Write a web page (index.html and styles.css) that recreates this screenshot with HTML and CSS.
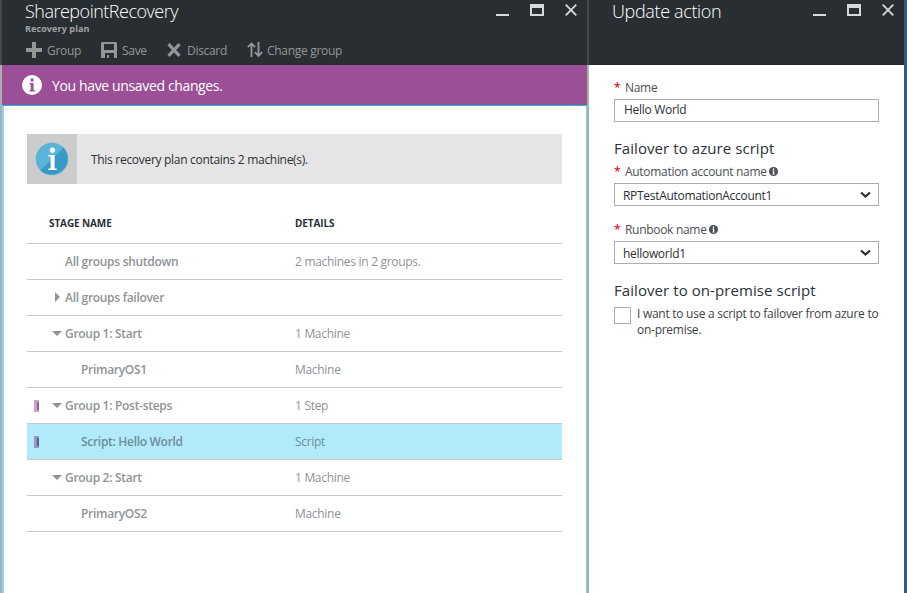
FILE: index.html
```html
<!DOCTYPE html>
<html lang="en">
<head>
<meta charset="utf-8">
<title>SharepointRecovery</title>
<link rel="stylesheet" href="styles.css">
</head>
<body>
<svg width="0" height="0" class="defs">
  <symbol id="min" viewBox="0 0 14 14"><path d="M0 10h13v2H0z"/></symbol>
  <symbol id="max" viewBox="0 0 14 12"><path fill-rule="evenodd" d="M0 0h14v12H0zM2 4v6h10V4z"/></symbol>
  <symbol id="close" viewBox="0 0 12 12"><path d="M.7.7l10.6 10.6M11.3.7L.7 11.3" fill="none" stroke="currentColor" stroke-width="1.8"/></symbol>
  <symbol id="info" viewBox="0 0 20 20"><circle cx="10" cy="10" r="10"/><path class="cut" d="M8.6 3.6h3v2.8h-3zM7.6 8h4v7h1.1v1.5H7.6V15h1.1V9.5H7.6z"/></symbol>
  <symbol id="chev" viewBox="0 0 11 8"><path d="M1 1.5l4.5 4 4.5-4" fill="none" stroke="currentColor" stroke-width="2.3"/></symbol>
</svg>
<div class="portal">
  <section class="blade plan">
    <header class="head">
      <div class="titlebar">
        <h1>SharepointRecovery</h1>
        <div class="controls"><svg class="i-min"><use href="#min"/></svg><svg class="i-max"><use href="#max"/></svg><svg class="i-close"><use href="#close"/></svg></div>
      </div>
      <div class="subtitle">Recovery plan</div>
      <nav class="commands">
        <a class="c-group"><svg width="16" height="16" viewBox="0 0 16 16"><path d="M6 0h4v6h6v4h-6v6H6v-6H0V6h6z"/></svg><span>Group</span></a>
        <a class="c-save"><svg width="16" height="16" viewBox="0 0 16 16"><path fill-rule="evenodd" d="M1 0h14l1 1v15h-3v-5H4v5H0V1zM3 2v6h10V2zM6 13h2v3H6z"/></svg><span>Save</span></a>
        <a class="c-discard"><svg width="14" height="14" viewBox="0 0 14 14"><path d="M1.5 1.2l11 11.6M12.5 1.2l-11 11.6" stroke="currentColor" stroke-width="3.2"/></svg><span>Discard</span></a>
        <a class="c-change"><svg width="16" height="16" viewBox="0 0 16 16"><path d="M4.5 15V1.5M.8 5.2L4.5 1.5l3.7 3.7M11.5 0v13.8M7.9 10.2l3.6 3.7 3.7-3.7" fill="none" stroke="currentColor" stroke-width="1.9"/></svg><span>Change group</span></a>
      </nav>
    </header>
    <div class="notice"><svg width="20" height="20"><use href="#info"/></svg><span>You have unsaved changes.</span></div>
    <main class="body">
      <div class="infobox">
        <div class="badge"><svg width="34" height="34" viewBox="0 0 34 34"><circle cx="17" cy="17" r="16.3" fill="#59b4d9"/><path d="M28.5 5.5A16.3 16.3 0 0 1 5.5 28.5z" fill="#3999c6"/><circle cx="17.4" cy="8.2" r="2.6" fill="#fff"/><path d="M13.3 13h6.3v13.2l2.2.5v1.2h-8.5v-1.2l2.3-.5V14.7l-2.3-.5z" fill="#fff"/></svg></div>
        <p>This recovery plan contains 2 machine(s).</p>
      </div>
      <div class="table">
        <div class="row th"><div class="name">STAGE NAME</div><div class="detail">DETAILS</div></div>
        <div class="row"><div class="name">All groups shutdown</div><div class="detail">2 machines in 2 groups.</div></div>
        <div class="row"><div class="name"><i class="right"></i>All groups failover</div><div class="detail"></div></div>
        <div class="row"><div class="name"><i class="down"></i>Group 1: Start</div><div class="detail">1 Machine</div></div>
        <div class="row"><div class="name child">PrimaryOS1</div><div class="detail">Machine</div></div>
        <div class="row"><b class="mark"></b><div class="name"><i class="down"></i>Group 1: Post-steps</div><div class="detail">1 Step</div></div>
        <div class="row selected"><b class="mark"></b><div class="name child">Script: Hello World</div><div class="detail">Script</div></div>
        <div class="row"><div class="name"><i class="down"></i>Group 2: Start</div><div class="detail">1 Machine</div></div>
        <div class="row"><div class="name child">PrimaryOS2</div><div class="detail">Machine</div></div>
      </div>
    </main>
  </section>
  <section class="blade action">
    <header class="head">
      <div class="titlebar">
        <h1>Update action</h1>
        <div class="controls"><svg class="i-min"><use href="#min"/></svg><svg class="i-max"><use href="#max"/></svg><svg class="i-close"><use href="#close"/></svg></div>
      </div>
    </header>
    <form class="form">
      <div class="label"><em>*</em><span>Name</span></div>
      <div class="field input"><span>Hello World</span></div>
      <h2 class="h-azure">Failover to azure script</h2>
      <div class="label"><em>*</em><span>Automation account name</span><svg width="9" height="9"><use href="#info"/></svg></div>
      <div class="field"><span>RPTestAutomationAccount1</span><svg width="11" height="8"><use href="#chev"/></svg></div>
      <div class="label second"><em>*</em><span>Runbook name</span><svg width="9" height="9"><use href="#info"/></svg></div>
      <div class="field"><span>helloworld1</span><svg width="11" height="8"><use href="#chev"/></svg></div>
      <h2 class="h-prem">Failover to on-premise script</h2>
      <div class="check"><div class="box"></div><p>I want to use a script to failover from azure to<br>on-premise.</p></div>
    </form>
  </section>
</div>
</body>
</html>
```
FILE: styles.css
```css
* { box-sizing: border-box; }
body { margin: 0; overflow: hidden; font: 12px/16px "Open Sans", "Noto Sans", sans-serif; letter-spacing: -.3px; color: #2c3036; }
h1, h2, p { margin: 0; font-weight: 400; white-space: nowrap; }
svg { display: block; flex: none; fill: currentColor; }
.defs { position: absolute; }
span { white-space: nowrap; }
.portal { display: flex; width: 907px; height: 593px; background: #2f5f80; }
.blade { display: flex; flex-direction: column; background: #fff; }
.plan { width: 589px; }
.action { width: 315px; }
.head { height: 65px; flex: none; background: #292e32; color: #fff; }
.plan .head { border-left: 2px solid #44484c; border-right: 2px solid #44484c; padding-left: 23px; }
.action .head { padding-left: 23px; }
.titlebar { display: flex; justify-content: space-between; height: 22px; }
h1 { font-size: 18px; line-height: 22px; letter-spacing: -.75px; font-weight: 300; }
.plan h1 { letter-spacing: -.5px; }
.action h1 { letter-spacing: -.35px; }
.controls { display: flex; color: #d6d9db; padding: 4px 10px 0 0; }
.i-min { width: 14px; height: 14px; margin-right: 20px; }
.i-max { width: 14px; height: 12px; margin-right: 21px; }
.i-close { width: 12px; height: 12px; }
.subtitle { font-size: 9px; line-height: 12px; font-weight: 700; color: #a0a2a5; letter-spacing: .1px; padding-top: 1px; height: 12px; }
.commands { display: flex; margin-top: 8px; color: #949699; padding-left: 1px; }
.commands a { display: flex; height: 16px; align-items: center; }
.commands span { padding-top: 2px; }
.c-group { width: 75px; gap: 5px; }
.c-save { width: 66px; gap: 5px; }
.c-discard { width: 80px; gap: 6px; }
.c-change { gap: 4px; }
.notice { height: 40px; flex: none; margin: 0 2px; background: #9b4f96; color: #fff; display: flex; align-items: center; padding-left: 20px; gap: 10px; font-size: 14px; letter-spacing: -.36px; box-shadow: -2px 0 #adadad, 2px 0 #adadad; }
.notice span { padding-top: 2px; }
.notice svg { --cut: #9b4f96; }
.cut { fill: var(--cut, #fff); }
.body { flex: 1; margin: 0 2px; border: 1px solid #1cb8ed; border-width: 1px 1px 0 2px; border-left-color: #80dcf9; border-right-color: #68d4f7; box-shadow: -2px 0 #adadad, 2px 0 #adadad; padding: 28px 24px 0 23px; }
.infobox { display: flex; height: 50px; background: #e5e5e5; align-items: center; }
.infobox p { padding-top: 2px; }
.badge { width: 50px; height: 50px; display: grid; place-items: center; background: #ccc; margin-right: 14px; }
.table { padding-top: 20px; color: #8f9397; }
.row { height: 36px; display: flex; align-items: center; border-bottom: 1px solid #c8c9ca; position: relative; }
.row.th { height: 40px; color: #2c3036; font-size: 10px; letter-spacing: -.1px; padding-bottom: 1px; }
.name { width: 268px; padding-left: 38px; font-weight: 600; position: relative; }
.th .name { padding-left: 22px; font-weight: 700; }
.th .detail { font-weight: 700; }
.name.child { padding-left: 54px; }
.selected { background: #b1ebfb; color: #6f8b99; }
.mark { position: absolute; left: 7px; top: 12px; width: 5px; height: 12px; background: #7f7287; border: solid #cda0cb; border-width: 2px 0 2px 3px; }
.selected .mark { background: #4c6384; border-color: #a092c6; }
.right, .down { position: absolute; }
.right { left: 28px; top: 2px; border: solid transparent; border-width: 5px 0 5px 5px; border-left-color: #8f9397; }
.down { left: 25px; top: 5px; border: solid transparent; border-width: 5px 5px 0; border-top-color: #8f9397; }
.form { padding: 15px 25px 0; }
.label { display: flex; align-items: center; height: 16px; color: #4b4f54; }
.label em { width: 11px; font-style: normal; font-weight: 600; color: #e81123; }
.label svg { margin: -1px 0 0 2px; }
.field { height: 23px; border: 1px solid #adadad; margin-top: 3px; padding: 1px 7px 0 8px; display: flex; align-items: center; justify-content: space-between; }
.field span { padding-top: 1px; }
.field svg { margin-bottom: 1px; }
.field.input { padding: 0 9px 1px; }
.field.input span { padding: 0; }
h2 { font-size: 15px; line-height: 20px; letter-spacing: .07px; }
.h-azure { margin: 16px 0 6px; }
.second { margin-top: 16px; }
.h-prem { margin: 16px 0 6px; }
.check { display: flex; gap: 6px; color: #3e4247; letter-spacing: -.27px; }
.box { width: 17px; height: 17px; border: 1px solid #adadad; margin-top: 1px; flex: none; }
```
